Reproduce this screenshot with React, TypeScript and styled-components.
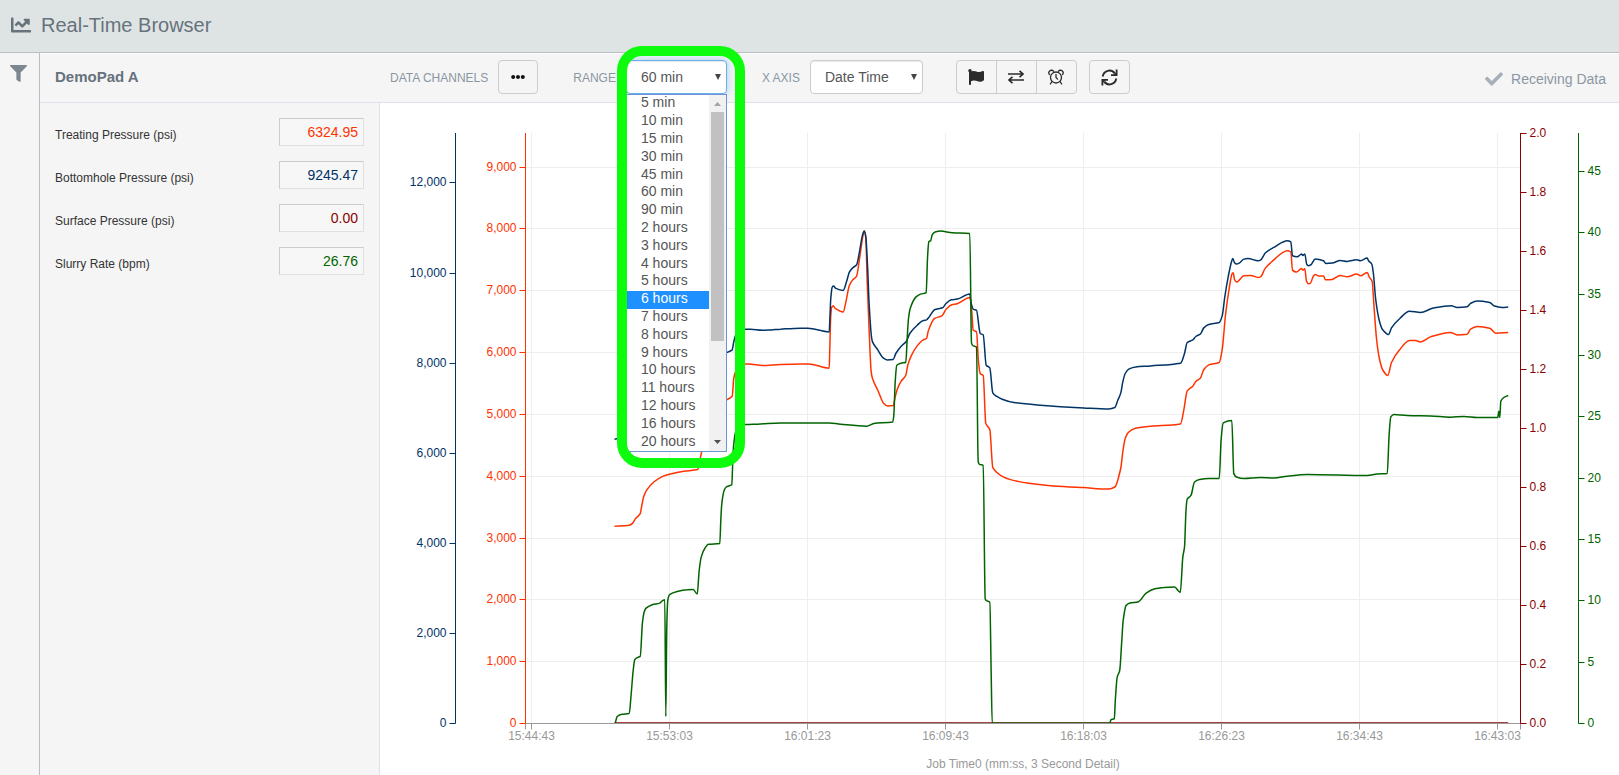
import React, { useLayoutEffect, useRef, useState } from 'react';
import styled, { createGlobalStyle } from 'styled-components';
import { FaChartLine, FaCheck, FaEllipsisH, FaFilter, FaFlag } from 'react-icons/fa';

const colors = {
  orange: '#ff3300',
  navy: '#003366',
  maroon: '#8b0000',
  green: '#006400',
  slate: '#67727d',
  muted: '#8a97a3',
  panel: '#f5f5f5',
  line: '#dfe1e8',
  rule: '#b9bec4',
  grid: '#eeeeee',
  axis: '#999999',
};

const GlobalStyle = createGlobalStyle`
  * { box-sizing: border-box; }
  body {
    margin: 0;
    background: #fff;
    color: #333;
    font-family: "Liberation Sans", Arial, sans-serif;
    font-size: 14px;
  }
  button, input, select { font-family: inherit; }
`;

const Page = styled.div`
  display: flex;
  flex-direction: column;
  min-height: 100vh;
`;

const Header = styled.header`
  display: flex;
  align-items: center;
  gap: 10px;
  height: 53px;
  padding: 0 11px 3px;
  background: #dee4e4;
  border-bottom: 1px solid ${colors.rule};
  color: ${colors.slate};
`;

const PageTitle = styled.h1`
  margin: 0;
  font-size: 20px;
  line-height: 24px;
  font-weight: 400;
`;

const Body = styled.div`
  display: flex;
  flex: 1;
`;

const Rail = styled.nav`
  width: 40px;
  padding: 12px 0 0 10px;
  background: ${colors.panel};
  border-right: 1px solid ${colors.rule};
`;

const RailButton = styled.button`
  display: block;
  padding: 0;
  border: 0;
  background: none;
  color: #7d8790;
  line-height: 0;
`;

const Main = styled.main`
  display: flex;
  flex: 1;
  flex-direction: column;
  min-width: 0;
  padding-top: 1px;
`;

const Toolbar = styled.div`
  display: flex;
  align-items: center;
  height: 49px;
  padding: 0 13px 2px 15px;
  background: ${colors.panel};
  border-bottom: 1px solid ${colors.line};
`;

const PadName = styled.h2`
  flex: 0 0 335px;
  margin: 0;
  color: ${colors.slate};
  font-size: 15px;
  line-height: 18px;
`;

const Controls = styled.div`
  display: flex;
  align-items: center;
  gap: 35px;
`;

const Field = styled.div`
  display: flex;
  align-items: center;
  gap: 10px;
`;

const FieldLabel = styled.label`
  padding-top: 2px;
  color: ${colors.muted};
  font-size: 12px;
  line-height: 16px;
  white-space: nowrap;
`;

const ToolButton = styled.button`
  display: flex;
  align-items: center;
  justify-content: center;
  width: 41px;
  height: 34px;
  padding: 0;
  background: ${colors.panel};
  border: 1px solid #ccc;
  border-radius: 4px;
  color: #2b2b2b;
`;

const MoreButton = styled(ToolButton)`
  width: 40px;
  color: #111;
`;

const ButtonSet = styled.div`
  display: flex;
  gap: 12px;
  margin-left: -2px;
`;

const ButtonGroup = styled.div`
  display: flex;
  ${ToolButton} + ${ToolButton} { margin-left: -1px; }
  ${ToolButton}:not(:first-child) { border-top-left-radius: 0; border-bottom-left-radius: 0; }
  ${ToolButton}:not(:last-child) { border-top-right-radius: 0; border-bottom-right-radius: 0; }
`;

const SelectWrap = styled.div<{ $width: number }>`
  position: relative;
  width: ${(p) => p.$width}px;
`;

const Select = styled.select<{ $focused?: boolean }>`
  display: block;
  width: 100%;
  height: 34px;
  padding: 0 14px;
  appearance: none;
  background: #fff;
  border: 1px solid ${(p) => (p.$focused ? '#66afe9' : '#ccc')};
  border-radius: 4px;
  box-shadow: ${(p) =>
    p.$focused
      ? 'inset 0 1px 1px rgba(0,0,0,.08), 0 0 8px rgba(102,175,233,.6)'
      : 'inset 0 1px 1px rgba(0,0,0,.08)'};
  color: #555;
  font-size: 14px;
`;

const SelectArrow = styled.svg`
  position: absolute;
  top: 14px;
  right: 6px;
  width: 6px;
  height: 6px;
  fill: #444;
  pointer-events: none;
`;

const Menu = styled.div`
  position: absolute;
  z-index: 2;
  top: 34px;
  left: 0;
  right: 0;
  display: flex;
  height: 358px;
  background: #fff;
  border: 1px solid #6d94d4;
`;

const OptionList = styled.ul`
  display: grid;
  flex: 1;
  grid-template-rows: repeat(20, 1fr);
  margin: 0;
  padding: 0;
  list-style: none;
`;

const Option = styled.li<{ $active: boolean }>`
  display: flex;
  align-items: center;
  padding: 0 0 2px 14px;
  background: ${(p) => (p.$active ? '#1e90ff' : 'transparent')};
  color: ${(p) => (p.$active ? '#fff' : '#555')};
  font-size: 14px;
  line-height: 15px;
`;

const ScrollBar = styled.div`
  display: flex;
  flex-direction: column;
  align-items: center;
  width: 17px;
  padding: 0 2px;
  background: #f1f1f1;
`;

const ScrollArrow = styled.svg<{ $enabled?: boolean }>`
  flex: none;
  width: 7px;
  height: 17px;
  fill: ${(p) => (p.$enabled ? '#505050' : '#a3a3a3')};
`;

const ScrollTrack = styled.div`
  flex: 1;
  width: 100%;
`;

const ScrollThumb = styled.div`
  height: 71%;
  background: #c1c1c1;
`;

const Highlight = styled.div`
  position: absolute;
  z-index: 3;
  top: -14px;
  left: -9px;
  right: -18px;
  height: 422px;
  border: 10px solid #0dfc0d;
  border-radius: 25px;
  pointer-events: none;
`;

const Status = styled.div`
  display: flex;
  align-items: center;
  gap: 8px;
  margin-left: auto;
  padding-top: 3px;
  color: ${colors.muted};
  line-height: 18px;
  svg { color: #a7b0b9; }
`;

const Content = styled.div`
  display: flex;
  flex: 1;
`;

const ReadingsPanel = styled.section`
  display: flex;
  flex: 0 0 340px;
  flex-direction: column;
  gap: 15px;
  padding: 15px;
  background: ${colors.panel};
  border-right: 1px solid ${colors.line};
`;

const Reading = styled.div`
  display: flex;
  align-items: flex-end;
  justify-content: space-between;
`;

const ReadingLabel = styled.label`
  color: #333;
  font-size: 12px;
  line-height: 22px;
`;

const ReadingValue = styled.input<{ $color: string }>`
  width: 85px;
  height: 28px;
  padding: 0 5px;
  background: #f7f7f7;
  border: 1px solid;
  border-color: #ccc #e0e0e0 #e0e0e0 #ccc;
  color: ${(p) => p.$color};
  font-size: 14px;
  text-align: right;
`;

const ChartArea = styled.section`
  display: flex;
  flex: 1;
  min-width: 0;
  min-height: 480px;
  background: #fff;
`;

const ChartSvg = styled.svg`
  flex: 1;
  min-width: 0;
  font-size: 12px;
`;

/* Traces are stored on a 995 x 590 field whose corner is at (525, 133). */
const FIELD = { left: 525, top: 133, width: 995, height: 590 };

const bottomhole =
  '614,439 620,438 640,436 660,430 690,420 700,385 705,365 715,355 727,352 731.7,349.7 733,343 735,335.3 738,331 745.3,329 750,329 761.7,330 771,329.7 780,329 800,328 807.3,328 828.7,331.7 829.5,315 830.3,298.3 831.7,287 833,286 835.3,288.3 842.7,290.3 846,281.7 849,271.7 852.7,267.3 856,265 858.7,253.3 862,235 863.7,231 865.3,236.7 867,265 868.7,305 871,336.7 872,341.7 877.3,349.7 882.7,357.7 886.7,359.7 892.7,359.3 895.3,353.3 900.7,346 906,341 909.3,333.3 916.7,325 922.7,320.3 926,319.7 928.7,316.7 934,309.7 942,307.7 945.3,303.7 950.7,299.7 956.7,299 969.3,294 970.7,303.3 973,309.3 976,310 978.7,328.3 979.7,333.3 982.7,334.7 985.7,365 989.3,367.7 992.3,392.7 996,396 1001.7,399 1013.3,402.3 1036.7,404.7 1083.3,407.7 1108.3,408.7 1114.3,407.3 1117.3,400 1120.3,392.7 1122.3,381.7 1124.7,373.3 1128.7,368.7 1135,366.7 1150,365.7 1180,363 1184,353.3 1186.7,342.3 1192.3,339.7 1195.3,336.3 1200,333.7 1203.3,327.7 1208.3,324.3 1218.7,322.3 1221.7,315.7 1224.3,296.7 1227.7,276.7 1231,261.7 1232.3,258.3 1234,262.7 1236,264 1238.7,263 1243.3,259 1247.3,258.3 1257.7,260.7 1260,260 1265,252.7 1273.3,247.3 1281.7,242.3 1286.7,240.7 1290.3,241.7 1292,255.7 1296.7,256.7 1301,254 1302.3,255.3 1304.3,254 1306.3,264.3 1308.3,265.7 1310.3,264.7 1314.7,259 1323,260.7 1325.3,263.3 1331.7,263 1339.7,260.3 1346.7,261.3 1356.3,259.7 1360,260.7 1366.7,258 1368,260.7 1371.3,264 1372.7,271.7 1375.3,300 1378.7,320 1382,329.3 1388,334.3 1391,327.7 1399.3,318.3 1409,311 1420,312.3 1432.7,308 1450.7,305.7 1456.7,307.3 1466.7,306.7 1470,303.3 1476.7,301 1489.3,302.3 1493.3,305.7 1501.7,307.3 1507.7,307';

const treating =
  '614,526 628.7,525 631.7,523.3 635,518.3 639.7,513.3 641.3,505 643.3,496 646,490 653.3,481.7 661.7,476.3 670,473.7 683.3,471 697.3,469.3 699,461 701,452 704,425 710,410 718,402 726.7,399.3 731.7,396 733.3,378 735,371.7 738,366 745.3,363.7 751,364 761.7,365.3 780,364.3 800,363.7 808.3,363.7 828.7,368 829.3,348 830.3,315 831.3,307 832.7,305.7 834.7,308.3 842.7,311.7 845.3,302.3 848.7,286 852,280 856,276.3 859.3,256.7 862,238.3 863.7,231 865.3,238 866.7,281.7 868.7,331.7 870.7,371.7 872,378.3 877.3,390 883.3,403.3 887.3,405.7 892.7,405.3 894.7,396.7 896.7,389.3 900.7,381 905.3,375 907.3,365 910.7,355.7 916.7,345.7 922.7,339.7 926,338.3 928,330 934,318.3 941.3,315.7 946,308.7 951.3,304.7 956.7,303.7 969.3,297.3 971.3,311.7 972.7,330 976,331.7 978,361.7 979.7,373.3 982.7,375.3 985.3,423.3 989.3,429.3 992.3,467.3 1000,475 1010,479.3 1026.7,482.7 1053.3,485.7 1083.3,487.3 1108.3,488.7 1114.3,486.7 1120.3,467.7 1122.3,451.7 1124.7,438.3 1128,432 1135,428 1150,426 1180,423.7 1183.3,410 1186.7,390.7 1192.3,386 1195.3,381.3 1200,377.7 1203.3,369.3 1208.3,364.7 1218.7,362.3 1221.7,349.3 1225,315 1228.7,288.3 1231.7,273.3 1232.7,272.7 1234,279.3 1236,282 1243.3,275.7 1250,275.3 1257.7,277.3 1260,276.7 1264.7,268.3 1275,258.3 1281.7,252.7 1286.7,250.7 1290.3,251.7 1292,270 1296,272 1301,268.3 1302.3,270 1304.3,268.7 1306,281 1308,283.7 1310,283 1312.7,276.3 1314.7,274.3 1318.3,276 1323,276 1325,279.7 1331.7,279.3 1339.7,275.3 1346.7,276.7 1356.3,274 1360,275.7 1366.7,272.3 1368.7,276.7 1371.7,281.3 1373.3,303.3 1376,338.3 1378.7,357.3 1382,369.3 1387.3,375.3 1391,362.3 1399.3,349.3 1409,340.3 1415,340.3 1420,341.7 1430,336.7 1450,332.3 1456.7,334.7 1466.7,334 1470,329 1476.7,326.3 1489.3,328 1495.3,333 1507.7,332.3';

const slurry =
  '614.7,722.7 616.7,716 621.3,713.7 628.7,713 630.7,693.3 632.7,670 634.3,659.3 637.3,657 639.7,656 642,621.7 643.7,611.7 645.3,608 651.7,604.3 659.3,602.7 662,600.3 664.3,599.3 665.3,716 666.3,626.7 667.3,600 669,594.3 676.7,591 686.7,589.3 692.7,589 696.7,593.7 698.7,570 700.7,556.7 704.7,547.3 708,544 719.3,543.3 720.3,520 721.3,503.3 723.7,490 725.7,486.7 731.3,484.3 732.3,460 733,446.7 734.7,433.3 737,427 745.3,424.3 760,423.7 780,422.7 828.7,422.7 840,424 866,426 873.3,423.3 892.3,421.7 893.3,415 894.7,381.7 896.3,365 900.7,363 905.3,362 906.7,338.3 908,318.3 909.7,308.3 915.3,297 920,294 925.7,292.7 927,258.3 928.3,241.7 930.3,240.3 931.7,234.7 935.3,231.7 940,231 951.7,232.7 969.3,233.3 971,342.7 972.3,345.3 976,346.7 977.7,461.7 979,464 982.7,465 984.7,598.3 986,600.3 989.3,601.7 990.7,673.3 991.7,722.7 1109.2,722.5 1110.6,719 1113.8,718.3 1114.9,698.3 1116.7,676.7 1119.2,670 1121.3,640 1122.7,620 1125.6,605 1129.5,602.7 1138,601.3 1145.6,592.7 1154.5,588.3 1163.4,587 1174,586.7 1179.8,592 1182.3,556.7 1184,546.7 1185.5,510 1186.6,499 1190.5,495 1194,481.7 1199,479.3 1208,478.3 1218.7,478.3 1220.7,438.3 1222.7,422.7 1231.3,420.3 1233.3,473.3 1236,476.7 1243.3,478.3 1260,477.3 1273.3,477.7 1286.7,476 1306.7,474.3 1366.7,475.3 1376.7,473.7 1386.7,473.3 1388.7,433.3 1390.3,416.7 1393.3,414.3 1406.7,415.3 1430,415.7 1450,417 1463.3,416.3 1476.7,417.3 1497.3,417.3 1498.3,411 1499.3,417.3 1500.3,401 1503.3,397.3 1507.7,395.3';

const surface = '614,722.5 1507.7,722.5';

const traces = [
  { name: 'Surface Pressure', color: colors.maroon, points: surface },
  { name: 'Treating Pressure', color: colors.orange, points: treating },
  { name: 'Bottomhole Pressure', color: colors.navy, points: bottomhole },
  { name: 'Slurry Rate', color: colors.green, points: slurry },
];

const timeTicks = ['15:44:43', '15:53:03', '16:01:23', '16:09:43', '16:18:03', '16:26:23', '16:34:43', '16:43:03'];

/* Monotone cubic through the points: smooth, and never past a sample's value. */
function smoothPath(pts: number[][]) {
  const slopes = pts.slice(1).map((p, i) => (p[1] - pts[i][1]) / (p[0] - pts[i][0] || 1));
  const tangents = pts.map((_, i) => {
    if (i === 0) return slopes[0];
    if (i === pts.length - 1) return slopes[i - 1];
    const a = slopes[i - 1];
    const b = slopes[i];
    return a * b <= 0 ? 0 : (2 * a * b) / (a + b);
  });
  let d = `M${pts[0][0].toFixed(1)} ${pts[0][1].toFixed(1)}`;
  for (let i = 1; i < pts.length; i++) {
    const [x0, y0] = pts[i - 1];
    const [x1, y1] = pts[i];
    const h = (x1 - x0) / 3;
    const control = [x0 + h, y0 + h * tangents[i - 1], x1 - h, y1 - h * tangents[i], x1, y1];
    d += `C${control.map((n) => n.toFixed(1)).join(' ')}`;
  }
  return d;
}

interface AxisProps {
  x: number;
  top: number;
  bottom: number;
  color: string;
  max: number;
  step: number;
  side: 'left' | 'right';
  format: (value: number) => string;
}

function ValueAxis({ x, top, bottom, color, max, step, side, format }: AxisProps) {
  const dir = side === 'left' ? -1 : 1;
  const count = Math.floor(max / step + 0.001);
  const ticks = Array.from({ length: count + 1 }, (_, i) => i * step);
  return (
    <g stroke={color} fill="none">
      <path d={`M${x} ${top}V${bottom}`} />
      {ticks.map((value) => {
        const y = Math.floor(bottom - (value / max) * (bottom - top)) + 0.5;
        return (
          <g key={value}>
            <path d={`M${x} ${y}h${6 * dir}`} />
            <text x={x + 9 * dir} y={Math.floor(y) + 4} fill={color} stroke="none" textAnchor={side === 'left' ? 'end' : 'start'}>
              {format(value)}
            </text>
          </g>
        );
      })}
    </g>
  );
}

function TrendChart() {
  const ref = useRef<SVGSVGElement>(null);
  const [size, setSize] = useState({ width: 1239, height: 672 });

  useLayoutEffect(() => {
    const node = ref.current;
    if (!node) return;
    const measure = () => {
      const box = node.getBoundingClientRect();
      setSize({ width: Math.round(box.width), height: Math.round(box.height) });
    };
    measure();
    const observer = new ResizeObserver(measure);
    observer.observe(node);
    return () => observer.disconnect();
  }, []);

  const left = 145.5;
  const top = 30;
  const right = size.width - 98.5;
  const bottom = size.height - 51.5;
  const scaleX = (right - left) / FIELD.width;
  const scaleY = (bottom - top) / FIELD.height;
  const trace = (points: string) =>
    smoothPath(
      points.split(' ').map((pair) => {
        const [x, y] = pair.split(',').map(Number);
        return [left + (x - FIELD.left) * scaleX, top + (y - FIELD.top) * scaleY];
      }),
    );
  const timeX = (i: number) => Math.floor(left + (6 + i * 138) * scaleX) + 0.5;
  const gridY = (i: number) => Math.floor(bottom - (i / 9.55) * (bottom - top)) + 0.5;
  const thousands = (v: number) => v.toLocaleString('en-US');

  return (
    <ChartArea aria-label="Trend chart">
      <ChartSvg ref={ref} role="img" aria-label="Pressure and slurry rate over job time">
        <g stroke={colors.grid}>
          {Array.from({ length: 9 }, (_, i) => (
            <path key={i} d={`M${left} ${gridY(i + 1)}H${right}`} />
          ))}
          {timeTicks.map((t, i) => (
            <path key={t} d={`M${timeX(i)} ${top}V${bottom}`} />
          ))}
        </g>
        {traces.map((t) => (
          <path key={t.name} d={trace(t.points)} fill="none" stroke={t.color} strokeWidth="1.5" strokeLinejoin="round" />
        ))}
        <path d={`M${left} ${bottom + 6}V${bottom}H${right}V${bottom + 6}`} stroke={colors.axis} fill="none" />
        {timeTicks.map((t, i) => (
          <g key={t}>
            <path d={`M${timeX(i)} ${bottom}v6`} stroke={colors.axis} />
            <text x={timeX(i)} y={Math.floor(bottom) + 17} fill={colors.axis} textAnchor="middle">
              {t}
            </text>
          </g>
        ))}
        <text x={(left + right) / 2} y={size.height - 7} fill={colors.axis} textAnchor="middle">
          Job Time0 (mm:ss, 3 Second Detail)
        </text>
        <ValueAxis x={75.5} top={top} bottom={bottom} color={colors.navy} max={13110} step={2000} side="left" format={thousands} />
        <ValueAxis x={left} top={top} bottom={bottom} color={colors.orange} max={9550} step={1000} side="left" format={thousands} />
        <ValueAxis x={right} top={top} bottom={bottom} color={colors.maroon} max={2} step={0.2} side="right" format={(v) => v.toFixed(1)} />
        <ValueAxis x={right + 58} top={top} bottom={bottom} color={colors.green} max={48.15} step={5} side="right" format={String} />
      </ChartSvg>
    </ChartArea>
  );
}

const ranges = [
  '5 min', '10 min', '15 min', '30 min', '45 min', '60 min', '90 min',
  '2 hours', '3 hours', '4 hours', '5 hours', '6 hours', '7 hours', '8 hours', '9 hours',
  '10 hours', '11 hours', '12 hours', '16 hours', '20 hours',
];

const readings = [
  { id: 'treating', label: 'Treating Pressure (psi)', value: '6324.95', color: colors.orange },
  { id: 'bottomhole', label: 'Bottomhole Pressure (psi)', value: '9245.47', color: colors.navy },
  { id: 'surface', label: 'Surface Pressure (psi)', value: '0.00', color: colors.maroon },
  { id: 'slurry', label: 'Slurry Rate (bpm)', value: '26.76', color: colors.green },
];

const DownArrow = () => (
  <SelectArrow viewBox="0 0 6 6" aria-hidden="true">
    <path d="M0 0h6L3 6z" />
  </SelectArrow>
);

const SwapIcon = () => (
  <svg width="16" height="14" viewBox="0 0 16 14" fill="none" stroke="currentColor" strokeWidth="1.6" aria-hidden="true">
    <path d="M0 4h15M11.5 0.8L15 4l-3.5 3.2M16 10H1M4.5 6.8L1 10l3.5 3.2" />
  </svg>
);

const AlarmIcon = () => (
  <svg width="16" height="16" viewBox="0 0 16 16" fill="none" stroke="currentColor" strokeWidth="1.3" strokeLinecap="round" aria-hidden="true">
    <circle cx="8" cy="8.5" r="5.5" />
    <path d="M8 5.5v3l1.600 1.600M3.800 12.800L2.300 15M12.200 12.800l1.500 2.200" />
    <path d="M1.500 5.500A2.300 2.300 0 1 1 5.500 2.200M14.500 5.500a2.300 2.300 0 1 0-4-3.300" />
  </svg>
);

const RefreshIcon = () => (
  <svg width="17" height="17" viewBox="0 0 17 17" aria-hidden="true">
    <path d="M1.800 7.500A6.600 6.600 0 0 1 13.700 4.400M15.200 9.500A6.600 6.600 0 0 1 3.300 12.600" fill="none" stroke="currentColor" strokeWidth="2" />
    <path d="M16.500 0.500V7H10v-1.800h2.800L14.700 3.500V0.500zM0.500 16.500V10H7v1.800H4.200L2.300 13.500v3z" fill="currentColor" />
  </svg>
);

export default function App() {
  const [range, setRange] = useState('60 min');
  const [axis, setAxis] = useState('Date Time');

  return (
    <Page>
      <GlobalStyle />
      <Header>
        <FaChartLine size={20} aria-hidden="true" />
        <PageTitle>Real-Time Browser</PageTitle>
      </Header>
      <Body>
        <Rail>
          <RailButton aria-label="Filter">
            <FaFilter size={17} />
          </RailButton>
        </Rail>
        <Main>
          <Toolbar>
            <PadName>DemoPad A</PadName>
            <Controls>
              <Field>
                <FieldLabel htmlFor="channels">DATA CHANNELS</FieldLabel>
                <MoreButton id="channels">
                  <FaEllipsisH size={14} aria-hidden="true" />
                </MoreButton>
              </Field>
              <Field>
                <FieldLabel htmlFor="range">RANGE</FieldLabel>
                <SelectWrap $width={101}>
                  <Select id="range" $focused value={range} onChange={(e) => setRange(e.target.value)}>
                    {ranges.map((r) => (
                      <option key={r}>{r}</option>
                    ))}
                  </Select>
                  <DownArrow />
                  <Menu>
                    <OptionList role="listbox" aria-label="Range">
                      {ranges.map((r) => (
                        <Option key={r} role="option" aria-selected={r === range} $active={r === '6 hours'} onClick={() => setRange(r)}>
                          {r}
                        </Option>
                      ))}
                    </OptionList>
                    <ScrollBar>
                      <ScrollArrow viewBox="0 0 7 17" aria-hidden="true">
                        <path d="M0 11h7L3.5 7z" />
                      </ScrollArrow>
                      <ScrollTrack>
                        <ScrollThumb />
                      </ScrollTrack>
                      <ScrollArrow $enabled viewBox="0 0 7 17" aria-hidden="true">
                        <path d="M0 6h7L3.5 10z" />
                      </ScrollArrow>
                    </ScrollBar>
                  </Menu>
                  <Highlight />
                </SelectWrap>
              </Field>
              <Field>
                <FieldLabel htmlFor="xaxis">X AXIS</FieldLabel>
                <SelectWrap $width={113}>
                  <Select id="xaxis" value={axis} onChange={(e) => setAxis(e.target.value)}>
                    <option>Date Time</option>
                    <option>Job Time</option>
                  </Select>
                  <DownArrow />
                </SelectWrap>
              </Field>
              <ButtonSet>
                <ButtonGroup>
                  <ToolButton aria-label="Flag">
                    <FaFlag size={16} />
                  </ToolButton>
                  <ToolButton aria-label="Swap">
                    <SwapIcon />
                  </ToolButton>
                  <ToolButton aria-label="Alarm">
                    <AlarmIcon />
                  </ToolButton>
                </ButtonGroup>
                <ToolButton aria-label="Refresh">
                  <RefreshIcon />
                </ToolButton>
              </ButtonSet>
            </Controls>
            <Status>
              <FaCheck size={18} aria-hidden="true" />
              <span>Receiving Data</span>
            </Status>
          </Toolbar>
          <Content>
            <ReadingsPanel aria-label="Current readings">
              {readings.map((r) => (
                <Reading key={r.id}>
                  <ReadingLabel htmlFor={r.id}>{r.label}</ReadingLabel>
                  <ReadingValue id={r.id} $color={r.color} value={r.value} readOnly />
                </Reading>
              ))}
            </ReadingsPanel>
            <TrendChart />
          </Content>
        </Main>
      </Body>
    </Page>
  );
}
